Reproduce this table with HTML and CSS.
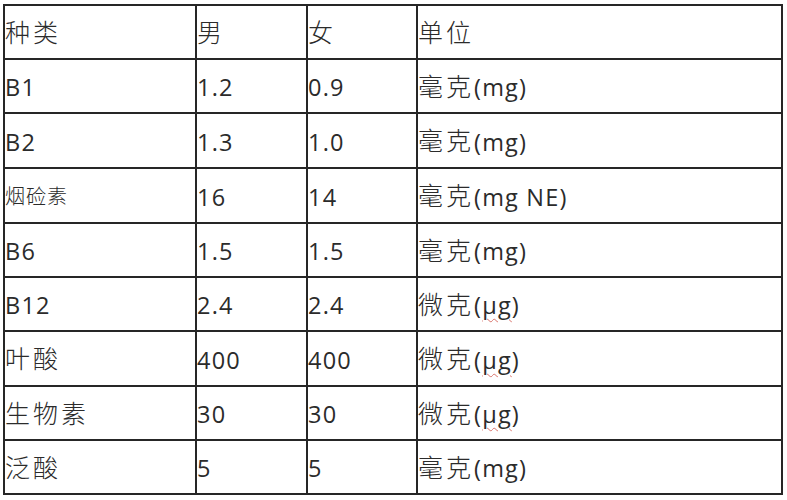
FILE: index.html
```html
<!DOCTYPE html>
<html lang="zh">
<head>
<meta charset="utf-8">
<link rel="stylesheet" href="styles.css">
</head>
<body>
<div class="grid">
  <div class="cell"><span class="zh">种类</span></div>
  <div class="cell"><span class="zh">男</span></div>
  <div class="cell"><span class="zh">女</span></div>
  <div class="cell"><span class="zh">单位</span></div>

  <div class="cell">B1</div>
  <div class="cell">1.2</div>
  <div class="cell">0.9</div>
  <div class="cell"><span class="zh">毫克</span>(mg)</div>

  <div class="cell">B2</div>
  <div class="cell">1.3</div>
  <div class="cell">1.0</div>
  <div class="cell"><span class="zh">毫克</span>(mg)</div>

  <div class="cell"><span class="zh small">烟硷素</span></div>
  <div class="cell">16</div>
  <div class="cell">14</div>
  <div class="cell"><span class="zh">毫克</span>(mg NE)</div>

  <div class="cell">B6</div>
  <div class="cell">1.5</div>
  <div class="cell">1.5</div>
  <div class="cell"><span class="zh">毫克</span>(mg)</div>

  <div class="cell">B12</div>
  <div class="cell">2.4</div>
  <div class="cell">2.4</div>
  <div class="cell"><span class="zh">微克</span>(<span class="spell">µg</span>)</div>

  <div class="cell"><span class="zh">叶酸</span></div>
  <div class="cell">400</div>
  <div class="cell">400</div>
  <div class="cell"><span class="zh">微克</span>(<span class="spell">µg</span>)</div>

  <div class="cell"><span class="zh">生物素</span></div>
  <div class="cell">30</div>
  <div class="cell">30</div>
  <div class="cell"><span class="zh">微克</span>(<span class="spell">µg</span>)</div>

  <div class="cell"><span class="zh">泛酸</span></div>
  <div class="cell">5</div>
  <div class="cell">5</div>
  <div class="cell"><span class="zh">毫克</span>(mg)</div>
</div>
</body>
</html>
```
FILE: styles.css
```css
html, body {
  margin: 0;
  padding: 0;
  background: #ffffff;
}

body {
  font-family: "Open Sans", "Noto Sans CJK SC", sans-serif;
  font-size: 23.5px;
  letter-spacing: 1.2px;
  color: #2b2b2b;
}

.grid {
  margin: 4px 0 0 3px;
  width: 780px;
  box-sizing: border-box;
  display: grid;
  grid-template-columns: 190px 109px 108px 363px;
  grid-template-rows: 52px 52px 53px 53px 52px 52px 53px 52px 52px;
  gap: 2px;
  padding: 2px;
  background: #262626;
}

.cell {
  background: #ffffff;
  display: flex;
  align-items: center;
  padding: 2px 0 0 0;
  box-sizing: border-box;
  overflow: hidden;
  white-space: nowrap;
}

.zh {
  font-family: "Noto Sans CJK SC", sans-serif;
  font-weight: 300;
  font-size: 25px;
  letter-spacing: 3px;
  margin-top: -5px;
}

.zh.small {
  font-size: 20px;
  letter-spacing: 1px;
  margin-top: -2px;
}

.spell {
  text-decoration: underline wavy #d9736b;
  text-decoration-thickness: 1px;
  text-underline-offset: 4px;
}
```
